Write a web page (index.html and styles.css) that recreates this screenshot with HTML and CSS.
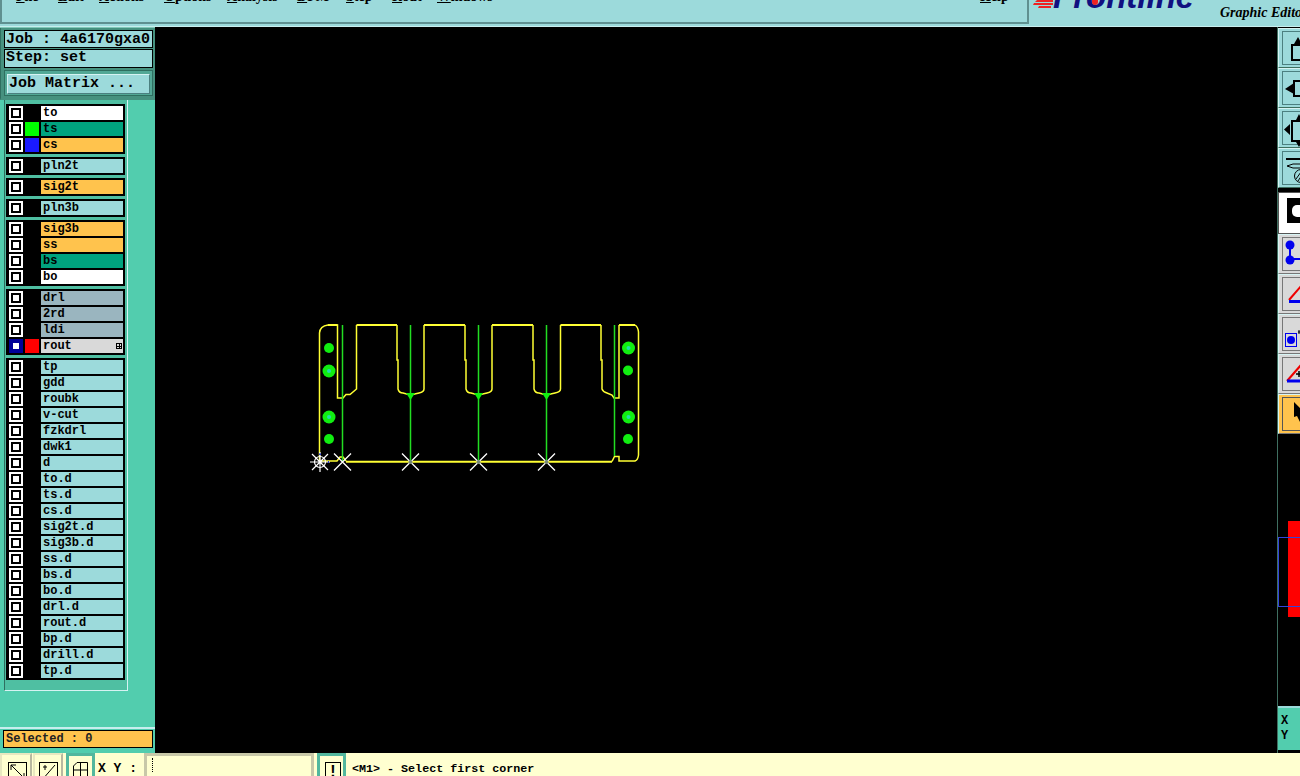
FILE: index.html
```html
<!DOCTYPE html>
<html lang="en">
  <head>
    <meta charset="UTF-8" />
    <title>Frontline Graphic Editor</title>
    <link rel="stylesheet" href="styles.css">
  </head>
  <body>
    <div class="app">
      <!-- Top menu and logo -->
      <div class="top-bar">
        <div class="menu-bar">
          <span class="menu-item m-file"><u>F</u>ile</span>
          <span class="menu-item m-edit"><u>E</u>dit</span>
          <span class="menu-item m-actions"><u>A</u>ctions</span>
          <span class="menu-item m-options"><u>O</u>ptions</span>
          <span class="menu-item m-analysis"><u>A</u>nalysis</span>
          <span class="menu-item m-dfm"><u>D</u>FM</span>
          <span class="menu-item m-step"><u>S</u>tep</span>
          <span class="menu-item m-rout"><u>R</u>out</span>
          <span class="menu-item m-windows"><u>W</u>indows</span>
          <span class="menu-item m-help"><u>H</u>elp</span>
        </div>
        <div class="logo-box">
          <svg class="logo-lines" width="20" height="9" viewBox="0 0 20 9">
            <path d="M4 0H20V2H2Z M1 3H20V5H0Z M6 6H18V8H5Z" fill="#ee2222" />
          </svg>
          <span class="logo-name">Frontline</span>
          <span class="logo-mark"></span>
          <span class="logo-sub">Graphic Editor</span>
        </div>
      </div>

      <div class="main-row">
        <!-- Left panel: job info and layer list -->
        <div class="left-panel">
          <div class="info-block">
            <div class="info-line">Job : 4a6170gxa0</div>
            <div class="info-line">Step: set</div>
            <div class="matrix-box">
              <div class="matrix-btn">Job Matrix ...</div>
            </div>
          </div>

          <div class="layer-area">
            <div class="layer-panel">
              <div class="layer-group">
                <div class="layer"><span class="check"></span><span class="swatch"></span><span class="name c-white">to</span></div>
                <div class="layer"><span class="check"></span><span class="swatch s-green"></span><span class="name c-green">ts</span></div>
                <div class="layer"><span class="check"></span><span class="swatch s-blue"></span><span class="name c-orange">cs</span></div>
              </div>
              <div class="layer-group">
                <div class="layer"><span class="check"></span><span class="swatch"></span><span class="name">pln2t</span></div>
              </div>
              <div class="layer-group">
                <div class="layer"><span class="check"></span><span class="swatch"></span><span class="name c-orange">sig2t</span></div>
              </div>
              <div class="layer-group">
                <div class="layer"><span class="check"></span><span class="swatch"></span><span class="name">pln3b</span></div>
              </div>
              <div class="layer-group">
                <div class="layer"><span class="check"></span><span class="swatch"></span><span class="name c-orange">sig3b</span></div>
                <div class="layer"><span class="check"></span><span class="swatch"></span><span class="name c-orange">ss</span></div>
                <div class="layer"><span class="check"></span><span class="swatch"></span><span class="name c-green">bs</span></div>
                <div class="layer"><span class="check"></span><span class="swatch"></span><span class="name c-white">bo</span></div>
              </div>
              <div class="layer-group">
                <div class="layer"><span class="check"></span><span class="swatch"></span><span class="name c-gray">drl</span></div>
                <div class="layer"><span class="check"></span><span class="swatch"></span><span class="name c-gray">2rd</span></div>
                <div class="layer"><span class="check"></span><span class="swatch"></span><span class="name c-gray">ldi</span></div>
                <div class="layer"><span class="check check-on"></span><span class="swatch s-red"></span><span class="name c-light">rout<span class="name-mark"></span></span></div>
              </div>
              <div class="layer-group">
                <div class="layer"><span class="check"></span><span class="swatch"></span><span class="name">tp</span></div>
                <div class="layer"><span class="check"></span><span class="swatch"></span><span class="name">gdd</span></div>
                <div class="layer"><span class="check"></span><span class="swatch"></span><span class="name">roubk</span></div>
                <div class="layer"><span class="check"></span><span class="swatch"></span><span class="name">v-cut</span></div>
                <div class="layer"><span class="check"></span><span class="swatch"></span><span class="name">fzkdrl</span></div>
                <div class="layer"><span class="check"></span><span class="swatch"></span><span class="name">dwk1</span></div>
                <div class="layer"><span class="check"></span><span class="swatch"></span><span class="name">d</span></div>
                <div class="layer"><span class="check"></span><span class="swatch"></span><span class="name">to.d</span></div>
                <div class="layer"><span class="check"></span><span class="swatch"></span><span class="name">ts.d</span></div>
                <div class="layer"><span class="check"></span><span class="swatch"></span><span class="name">cs.d</span></div>
                <div class="layer"><span class="check"></span><span class="swatch"></span><span class="name">sig2t.d</span></div>
                <div class="layer"><span class="check"></span><span class="swatch"></span><span class="name">sig3b.d</span></div>
                <div class="layer"><span class="check"></span><span class="swatch"></span><span class="name">ss.d</span></div>
                <div class="layer"><span class="check"></span><span class="swatch"></span><span class="name">bs.d</span></div>
                <div class="layer"><span class="check"></span><span class="swatch"></span><span class="name">bo.d</span></div>
                <div class="layer"><span class="check"></span><span class="swatch"></span><span class="name">drl.d</span></div>
                <div class="layer"><span class="check"></span><span class="swatch"></span><span class="name">rout.d</span></div>
                <div class="layer"><span class="check"></span><span class="swatch"></span><span class="name">bp.d</span></div>
                <div class="layer"><span class="check"></span><span class="swatch"></span><span class="name">drill.d</span></div>
                <div class="layer"><span class="check"></span><span class="swatch"></span><span class="name">tp.d</span></div>
              </div>
            </div>
          </div>

          <div class="selected-bar">Selected : 0</div>
        </div>

        <!-- Drawing canvas, viewBox uses page coordinates -->
        <svg class="canvas" viewBox="155 27 1122 726">
          <g fill="none" stroke="#ffff33" stroke-width="1.5">
            <path d="M319.5 461V333Q320 326 328 325H337.5V398H343L346 394.5H350L356.5 389V325" />
            <path d="M397 325V360H398V389Q399 393 403 393L410.5 395L419 393Q424 392 424 389V325" />
            <path d="M465 325V360H466V389Q467 393 471 393L478.5 395L487 393Q492 392 492 389V325" />
            <path d="M533 325V360H534V389Q535 393 539 393L546.5 395L555 393Q560.5 392 560.5 389V325" />
            <path d="M601 325V360H602V389Q603 392 607 393L612 395L614 398H619V325" />
            <path d="M635 325Q638 327 638.5 332V455Q638 460 635 461H619V456.5H614.5L612 461.5" />
            <path d="M319.5 461H337L340 457H343L346 461" />
          </g>
          <g fill="none" stroke="#ffff33" stroke-width="2">
            <path d="M328 325H337.5 M356.5 325H397 M424 325H465 M492 325H533 M560.5 325H601 M619 325H635" />
            <path d="M346 461.7H612" />
          </g>
          <g stroke="#22dd22" stroke-width="1.5">
            <path d="M342.5 325V461 M410.5 325V461 M478.5 325V461 M546.5 325V461 M614.5 325V456" />
          </g>
          <g fill="#11ee11">
            <path d="M406 393H415L410.5 400Z M474 393H483L478.5 400Z M542 393H551L546.5 400Z" />
            <circle cx="329" cy="348" r="5" />
            <circle cx="329" cy="371" r="6.5" />
            <circle cx="329" cy="417" r="6.5" />
            <circle cx="329" cy="439" r="5" />
            <circle cx="628.5" cy="348" r="6.5" />
            <circle cx="628" cy="370.5" r="5" />
            <circle cx="628.5" cy="417" r="6.5" />
            <circle cx="628" cy="439" r="5" />
          </g>
          <g fill="#22ddaa">
            <circle cx="329" cy="371" r="2" />
            <circle cx="329" cy="417" r="2" />
            <circle cx="628.5" cy="348" r="2" />
            <circle cx="628.5" cy="417" r="2" />
          </g>
          <g stroke="#ffffff" stroke-width="1.3">
            <path d="M334 453.5L351 470.5 M351 453.5L334 470.5" />
            <path d="M402 453.5L419 470.5 M419 453.5L402 470.5" />
            <path d="M470 453.5L487 470.5 M487 453.5L470 470.5" />
            <path d="M538 453.5L555 470.5 M555 453.5L538 470.5" />
          </g>
          <g fill="#778877">
            <circle cx="410.5" cy="462" r="2" />
            <circle cx="478.5" cy="462" r="2" />
            <circle cx="546.5" cy="462" r="2" />
          </g>
          <!-- datum marker -->
          <g stroke="#ffffff" fill="none" stroke-width="1.2">
            <circle cx="320" cy="462" r="5.5" />
            <path d="M310 462H330 M320 452V472 M312 454L328 470 M328 454L312 470" />
          </g>
          <path d="M320 453.5V455 M329 462H328" stroke="#2233cc" stroke-width="2" />
        </svg>

        <!-- Right tool strip -->
        <div class="tools">
          <div class="tool">
            <svg width="22" height="36" viewBox="0 0 22 36"><rect x="13" y="14" width="12" height="15" fill="none" stroke="#000" stroke-width="2" /><path d="M15 13L19 6L23 13Z" /></svg>
          </div>
          <div class="tool">
            <svg width="22" height="36" viewBox="0 0 22 36"><rect x="15" y="10" width="12" height="15" fill="none" stroke="#000" stroke-width="2" /><path d="M15 12V23L6 18Z" /></svg>
          </div>
          <div class="tool">
            <svg width="22" height="36" viewBox="0 0 22 36"><rect x="13" y="10" width="12" height="20" fill="none" stroke="#000" stroke-width="2" /><path d="M11 13V24L5 18.5Z M17 9L20 3L23 9Z M17 31L20 36L23 31Z" /></svg>
          </div>
          <div class="tool tool-last">
            <svg width="22" height="36" viewBox="0 0 22 36"><path d="M7 7H22V9H7Z" /><path d="M8 15L14 13H22V17H14Z" fill="none" stroke="#000" /><circle cx="22" cy="25" r="6.5" fill="none" stroke="#000" /><path d="M17 28L22 21 M19 30L23 24" stroke="#000" /></svg>
          </div>
          <div class="tool tool-white">
            <svg width="22" height="38" viewBox="0 0 22 38"><rect x="8" y="3" width="18" height="25" /><rect x="13" y="10" width="16" height="12" rx="5" fill="#fff" /></svg>
          </div>
          <div class="tool tool-gray">
            <svg width="22" height="36" viewBox="0 0 22 36"><circle cx="11" cy="8" r="4.5" fill="#0000ee" /><circle cx="11" cy="23" r="4.5" fill="#0000ee" /><path d="M11 8V23 M11 22H22" stroke="#0000ee" stroke-width="2" /></svg>
          </div>
          <div class="tool tool-gray">
            <svg width="22" height="36" viewBox="0 0 22 36"><path d="M10 23L22 9" stroke="#ee0000" stroke-width="2" /><path d="M10 24.5H22" stroke="#0000ee" stroke-width="3" /></svg>
          </div>
          <div class="tool tool-gray">
            <svg width="22" height="36" viewBox="0 0 22 36"><rect x="6.5" y="16.5" width="11" height="13" fill="none" stroke="#0000ee" /><circle cx="12" cy="23" r="4" fill="#0000ee" /><path d="M19 15H22 M20 13V17" stroke="#000" /></svg>
          </div>
          <div class="tool tool-gray">
            <svg width="22" height="36" viewBox="0 0 22 36"><path d="M8 24L22 8" stroke="#ee0000" stroke-width="2" /><path d="M8 24H22" stroke="#0000ee" stroke-width="3" /><path d="M17 17H22 M20 14V20" stroke="#000" stroke-width="1.5" /></svg>
          </div>
          <div class="tool tool-orange">
            <svg width="22" height="36" viewBox="0 0 22 36"><path d="M15 5L26 16L21 17L26 25H21L18 19L15 20Z" /></svg>
          </div>
          <svg class="preview" viewBox="1278 434 22 272">
            <rect x="1288" y="521" width="12" height="96" fill="#ff0000" />
            <rect x="1278.5" y="537.5" width="30" height="69" fill="none" stroke="#3344dd" />
          </svg>
          <div class="coords">X<br>Y</div>
        </div>
      </div>

      <!-- Bottom status bar -->
      <div class="status-bar">
        <div class="s-btn s-pale">
          <svg width="19" height="20" viewBox="0 0 19 20"><rect x="0.5" y="0.5" width="18" height="19" fill="none" stroke="#000" /><path d="M3 3L16 16 M3 3H8 M3 3V8 M16 16H11 M16 16V11" fill="none" stroke="#000" /></svg>
        </div>
        <div class="s-btn s-pale s-btn2">
          <svg width="19" height="20" viewBox="0 0 19 20"><rect x="0.5" y="0.5" width="18" height="19" fill="none" stroke="#000" /><path d="M3 18L16 3 M4 5H8 M6 3V8 M12 15H16" fill="none" stroke="#000" /></svg>
        </div>
        <div class="s-btn s-teal">
          <svg width="15" height="20" viewBox="0 0 15 20"><path d="M4 0.5H14.5V20H0.5V4Z M0.5 8H14.5 M7.5 0.5V20" fill="none" stroke="#000" /></svg>
        </div>
        <div class="xy-label">X Y :</div>
        <div class="xy-input"><span class="caret"></span></div>
        <div class="s-btn s-teal s-bang"><span class="bang">!</span></div>
        <div class="message">&lt;M1&gt; - Select first corner</div>
      </div>
    </div>
  </body>
</html>
```

FILE: styles.css
```css
body {
  margin: 0;
  background: #000;
  font-family: "Liberation Mono", monospace;
  font-weight: bold;
  color: #000;
}

.app {
  width: 1300px;
  height: 776px;
  display: flex;
  flex-direction: column;
  overflow: hidden;
}

/* Top bar */
.top-bar {
  height: 27px;
  flex: none;
  display: flex;
  background: #9cdadb;
  border-bottom: 1px solid #c8eeee;
  box-sizing: border-box;
}

.menu-bar {
  position: relative;
  width: 1025px;
  height: 22px;
  border-left: 2px solid #5f9090;
  border-right: 2px solid #5f9090;
  border-bottom: 2px solid #5f9090;
  overflow: hidden;
  font-family: "Liberation Serif", serif;
  font-size: 14px;
}

.menu-item {
  position: absolute;
  top: -11px;
  line-height: 16px;
}

.m-file { left: 14px; }
.m-edit { left: 56px; }
.m-actions { left: 97px; }
.m-options { left: 162px; }
.m-analysis { left: 225px; }
.m-dfm { left: 295px; }
.m-step { left: 344px; }
.m-rout { left: 390px; }
.m-windows { left: 435px; }
.m-help { left: 978px; }

.logo-box {
  position: relative;
  flex: 1;
  overflow: hidden;
}

.logo-lines {
  position: absolute;
  left: 4px;
  top: 0;
}

.logo-name {
  position: absolute;
  left: 24px;
  top: -22px;
  font-family: "Liberation Sans", sans-serif;
  font-style: italic;
  font-size: 33px;
  line-height: 38px;
  color: #101080;
}

.logo-mark {
  position: absolute;
  left: 63px;
  top: 0;
  width: 6px;
  height: 5px;
  background: #ee2222;
  border-radius: 0 0 3px 3px;
}

.logo-sub {
  position: absolute;
  left: 191px;
  top: 5px;
  font-family: "Liberation Serif", serif;
  font-style: italic;
  font-size: 14px;
  line-height: 16px;
  white-space: nowrap;
}

.main-row {
  height: 726px;
  flex: none;
  display: flex;
}

/* Left panel */
.left-panel {
  width: 155px;
  flex: none;
  display: flex;
  flex-direction: column;
  background: #52cdae;
  border-top: 1px solid #7fc9b8;
  box-sizing: border-box;
}

.info-block {
  height: 72px;
  box-sizing: border-box;
  padding: 2px 2px 0 3px;
  background: #46917f;
  border-left: 1px solid #2f6f60;
  border-bottom: 2px solid #46917f;
}

.info-line {
  height: 16px;
  margin-bottom: 1px;
  padding-left: 1px;
  font-size: 15px;
  line-height: 17px;
  background: #9cdadb;
  border: 1px solid #000;
  white-space: nowrap;
}

.info-line + .info-line {
  height: 17px;
  line-height: 16px;
}

.matrix-box {
  margin-top: 2px;
  height: 18px;
  padding: 3px 2px;
  background: #52a896;
  border: 1px solid #2f6f60;
}

.matrix-btn {
  height: 14px;
  padding: 2px 0 2px 1px;
  font-size: 15px;
  line-height: 14px;
  background: #9cdadb;
  border: 1px solid;
  border-color: #d6f3f3 #4b8080 #4b8080 #d6f3f3;
}

.layer-area {
  height: 629px;
  flex: none;
  border-bottom: 2px solid #c8eeee;
  box-sizing: border-box;
}

.layer-panel {
  width: 119px;
  height: 586px;
  margin-left: 4px;
  padding: 4px 2px 0 1px;
  background: #4fbfa2;
  border-right: 1px solid #d6f3f3;
  border-bottom: 1px solid #d6f3f3;
  border-left: 1px solid #2f6f60;
}

.layer-group {
  margin-bottom: 3px;
  padding: 2px;
  background: #000;
}

.layer {
  display: flex;
  height: 14px;
  margin-bottom: 2px;
  background: #000;
}

.layer:last-child {
  margin-bottom: 0;
}

/* Layer row checkbox: white frame, black ring, white middle */
.check {
  position: relative;
  width: 14px;
  height: 14px;
  margin-left: 1px;
  background: #fff;
  flex: none;
}

.check::after {
  content: "";
  position: absolute;
  left: 2px;
  top: 2px;
  width: 6px;
  height: 6px;
  border: 2px solid #000;
  background: #fff;
}

.check-on {
  background: #000099;
}

.check-on::after {
  border-color: #000099;
}

.swatch {
  width: 14px;
  height: 14px;
  margin-left: 2px;
  flex: none;
}

.s-green { background: #00ff00; }
.s-blue { background: #1a1aff; }
.s-red { background: #ff0000; }

.name {
  position: relative;
  flex: 1;
  margin-left: 2px;
  padding-left: 2px;
  font-size: 12px;
  line-height: 14px;
  background: #9cdadb;
}

.c-white { background: #fff; }
.c-green { background: #00a37f; }
.c-orange { background: #ffc34d; }
.c-gray { background: #9ab5bf; }
.c-light { background: #d9d9d9; }

.name-mark {
  position: absolute;
  right: 1px;
  top: 4px;
  width: 4px;
  height: 4px;
  border: 1px solid #000;
  background: linear-gradient(#000, #000) center / 100% 1px no-repeat,
    linear-gradient(#000, #000) center / 1px 100% no-repeat;
}

.selected-bar {
  height: 16px;
  margin: 1px 2px 0 3px;
  padding-left: 2px;
  font-size: 12px;
  line-height: 16px;
  color: #222;
  background: #ffc34d;
  border: 1px solid #000;
}

/* Canvas */
.canvas {
  width: 1122px;
  height: 726px;
  flex: none;
  background: #000;
}

/* Right tool strip */
.tools {
  flex: 1;
  display: flex;
  flex-direction: column;
  padding-top: 1px;
  border-left: 1px solid #3f6f60;
  min-width: 0;
  overflow: hidden;
}

.tool {
  position: relative;
  height: 36px;
  padding-top: 2px;
  flex: none;
  overflow: hidden;
  background: #9cdadb;
  border-top: 1px solid #d6f3f3;
  border-left: 1px solid #d6f3f3;
  border-bottom: 1px solid #3f6f60;
}

/* inner outline of the raised button */
.tool::before {
  content: "";
  position: absolute;
  left: 3px;
  top: 2px;
  right: -2px;
  bottom: 2px;
  border: 1px solid #4b8080;
}

.tool svg {
  position: relative;
  display: block;
}

.tool-last {
  margin-bottom: 4px;
}

.tool-white {
  height: 38px;
  background: #fff;
  border-color: #555;
}

.tool-white::before {
  border-color: transparent;
}

.tool-gray {
  background: #d9d9d9;
  border-bottom-color: #777;
}

.tool-gray::before {
  border-color: #777;
}

.tool-orange {
  background: #ffc34d;
  border-bottom-color: #777;
}

.tool-orange::before {
  border-color: #555;
}

.preview {
  width: 22px;
  height: 272px;
  flex: none;
}

.coords {
  height: 44px;
  padding: 6px 0 0 3px;
  font-size: 12px;
  line-height: 15px;
  background: #52cdae;
  border-top: 2px solid #9cdadb;
  box-sizing: border-box;
}

/* Bottom status bar */
.status-bar {
  height: 23px;
  flex: none;
  display: flex;
  background: #ffffd0;
  overflow: hidden;
}

.s-btn {
  height: 40px;
  flex: none;
  box-sizing: border-box;
}

.s-btn svg {
  display: block;
}

.s-pale {
  width: 32px;
  padding: 7px 0 0 6px;
  border: 2px solid #e8e8c0;
  border-right-color: #b8b8a0;
}

.s-btn2 {
  margin-left: 1px;
  width: 30px;
  padding-left: 4px;
}

.s-teal {
  width: 29px;
  margin-left: 3px;
  padding: 6px 0 0 4px;
  background: #ffffd0;
  border: 3px solid #52b79e;
}

.xy-label {
  width: 49px;
  flex: none;
  padding: 8px 0 0 3px;
  box-sizing: border-box;
  font-size: 13px;
  line-height: 16px;
}

.xy-input {
  width: 170px;
  height: 40px;
  flex: none;
  box-sizing: border-box;
  border: 3px solid #c8c8a8;
  padding: 2px 0 0 5px;
}

.caret {
  display: block;
  width: 1px;
  height: 14px;
  border-left: 1px dotted #000;
}

.s-bang {
  width: 29px;
  margin-left: 3px;
  padding: 6px 0 0 5px;
}

.bang {
  display: block;
  width: 14px;
  height: 26px;
  border: 1px solid #000;
  text-align: center;
  font-family: "Liberation Sans", sans-serif;
  font-size: 16px;
  line-height: 18px;
}

.message {
  margin-left: 6px;
  padding-top: 8px;
  font-size: 11.7px;
  line-height: 16px;
  white-space: nowrap;
}
```
